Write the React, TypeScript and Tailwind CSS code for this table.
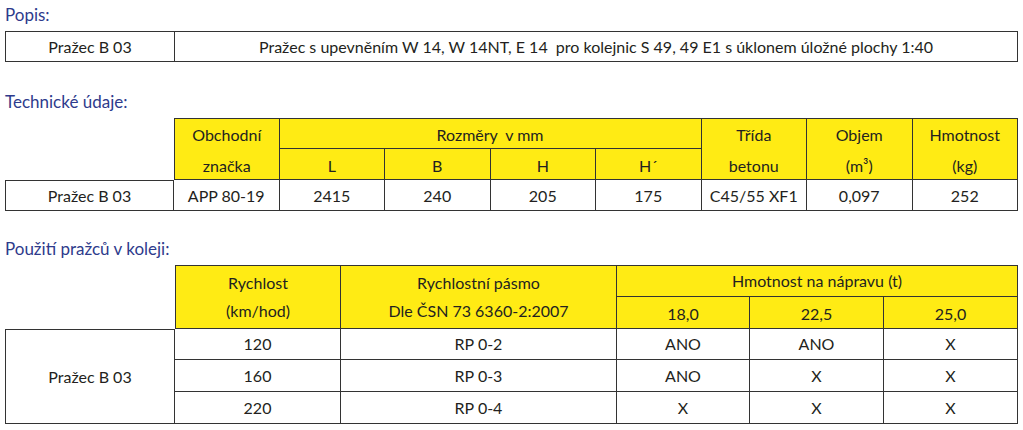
import React from 'react';

const cell = 'flex items-center justify-center text-center border-[#333] border-r border-b';
const yellow = 'bg-[#ffeb14]';

const Heading: React.FC<{ children: React.ReactNode; className?: string }> = ({ children, className }) => (
  <div className={`h-[22px] leading-[22px] text-[17px] text-[#2e3b8c] ${className ?? ''}`}>{children}</div>
);

const App: React.FC = () => {
  const usage = [
    { speed: '120', rp: 'RP 0-2', a: 'ANO', b: 'ANO', c: 'X' },
    { speed: '160', rp: 'RP 0-3', a: 'ANO', b: 'X', c: 'X' },
    { speed: '220', rp: 'RP 0-4', a: 'X', b: 'X', c: 'X' },
  ];

  return (
    <div className="w-[1023px] h-[430px] bg-white px-[5px] pt-[4px] text-[16px] text-[#231f20] font-['Lato',sans-serif] overflow-hidden">
      {/* Popis */}
      <Heading>Popis:</Heading>
      <div className="mt-[5px] grid grid-cols-[169px_1fr] h-[31px] border-t border-l border-[#333]">
        <div className={cell}>Pražec B 03</div>
        <div className={cell}>
          Pražec s upevněním W 14, W 14NT, E 14&nbsp; pro kolejnic S 49, 49 E1 s úklonem úložné plochy 1:40
        </div>
      </div>

      {/* Technické údaje */}
      <Heading className="mt-[29px]">Technické údaje:</Heading>
      <div className="mt-[5px] grid grid-cols-[169px_repeat(8,1fr)] grid-rows-[31px_31px_31px] leading-[31px]">
        <div className="row-span-2" />
        <div className={`${cell} ${yellow} row-span-2 border-t border-l flex-col pt-[2px]`}>
          <span>Obchodní</span>
          <span>značka</span>
        </div>
        <div className={`${cell} ${yellow} col-span-4 border-t pt-[2px]`}>Rozměry&nbsp; v mm</div>
        <div className={`${cell} ${yellow} row-span-2 border-t flex-col pt-[2px]`}>
          <span>Třída</span>
          <span>betonu</span>
        </div>
        <div className={`${cell} ${yellow} row-span-2 border-t flex-col pt-[2px]`}>
          <span>Objem</span>
          <span>(m³)</span>
        </div>
        <div className={`${cell} ${yellow} row-span-2 border-t flex-col pt-[2px]`}>
          <span>Hmotnost</span>
          <span>(kg)</span>
        </div>
        <div className={`${cell} ${yellow} pt-[2px]`}>L</div>
        <div className={`${cell} ${yellow} pt-[2px]`}>B</div>
        <div className={`${cell} ${yellow} pt-[2px]`}>H</div>
        <div className={`${cell} ${yellow} pt-[2px]`}>H´</div>

        <div className={`${cell} border-t border-l`}>Pražec B 03</div>
        <div className={cell}>APP 80-19</div>
        <div className={cell}>2415</div>
        <div className={cell}>240</div>
        <div className={cell}>205</div>
        <div className={cell}>175</div>
        <div className={cell}>C45/55 XF1</div>
        <div className={cell}>0,097</div>
        <div className={cell}>252</div>
      </div>

      {/* Použití */}
      <Heading className="mt-[27px]">Použití pražců v koleji:</Heading>
      <div className="mt-[5px] grid grid-cols-[170px_166px_276px_133px_134px_1fr] grid-rows-[32px_32px_31px_32px_32px]">
        <div className="row-span-2" />
        <div className={`${cell} ${yellow} row-span-2 border-t border-l flex-col leading-[28px]`}>
          <span>Rychlost</span>
          <span>(km/hod)</span>
        </div>
        <div className={`${cell} ${yellow} row-span-2 border-t flex-col leading-[28px]`}>
          <span>Rychlostní pásmo</span>
          <span>Dle ČSN 73 6360-2:2007</span>
        </div>
        <div className={`${cell} ${yellow} col-span-3 border-t`}>Hmotnost na nápravu (t)</div>
        <div className={`${cell} ${yellow} pt-[2px]`}>18,0</div>
        <div className={`${cell} ${yellow} pt-[2px]`}>22,5</div>
        <div className={`${cell} ${yellow} pt-[2px]`}>25,0</div>

        <div className={`${cell} row-span-3 border-t border-l`}>Pražec B 03</div>
        {usage.map((r) => (
          <React.Fragment key={r.speed}>
            <div className={cell}>{r.speed}</div>
            <div className={cell}>{r.rp}</div>
            <div className={cell}>{r.a}</div>
            <div className={cell}>{r.b}</div>
            <div className={cell}>{r.c}</div>
          </React.Fragment>
        ))}
      </div>
    </div>
  );
};

export default App;
